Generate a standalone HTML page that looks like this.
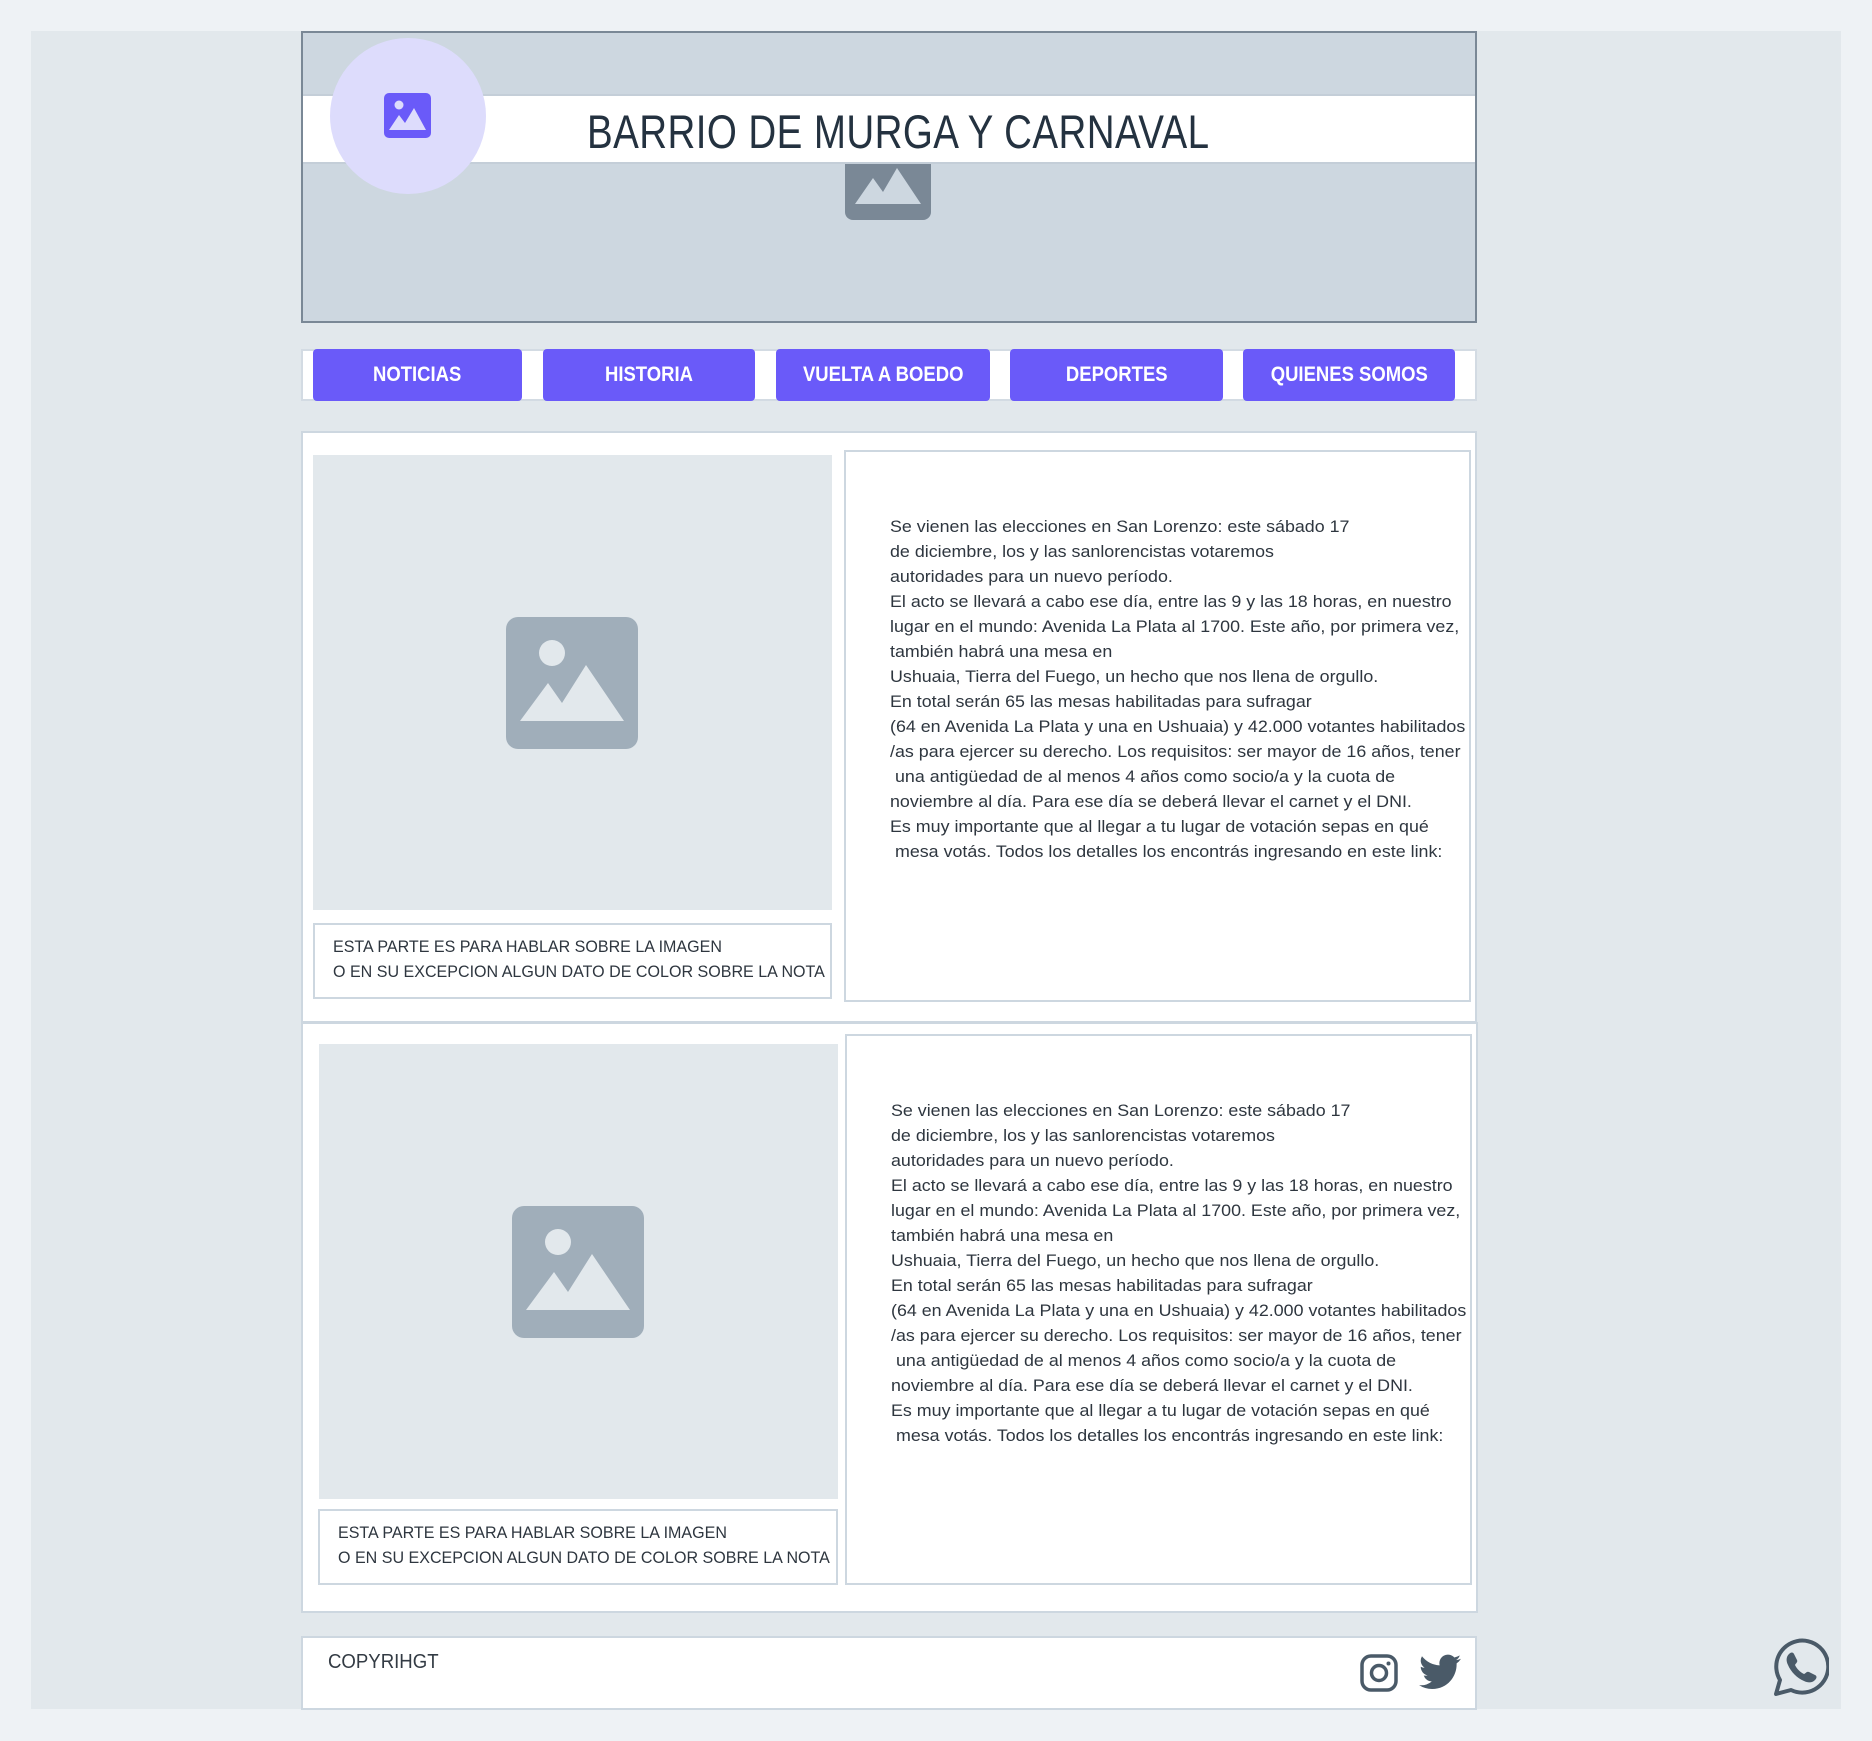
<!DOCTYPE html>
<html><head><meta charset="utf-8">
<style>
*{box-sizing:border-box;margin:0;padding:0}
body{width:1872px;height:1741px;background:#eef2f5;position:relative;overflow:hidden;font-family:"Liberation Sans",sans-serif;color:#333b44}
.a{position:absolute}
.panel{left:31px;top:31px;width:1810px;height:1678px;background:#e2e8ec}
.header{left:301px;top:31px;width:1176px;height:292px;background:#cdd7e0;border:2px solid #7a8896}
.band{left:303px;top:94px;width:1172px;height:70px;background:#fff;border-top:2px solid #c4ced8;border-bottom:2px solid #c4ced8}
.circle{left:330px;top:38px;width:156px;height:156px;border-radius:50%;background:#dddcfc}
.title{left:587px;top:104px;font-size:47px;color:#243240;white-space:nowrap;transform:scaleX(0.82);transform-origin:left top;letter-spacing:0.5px}
.nav{left:301px;top:349px;width:1176px;height:52px;background:#fff;border:2px solid #d3dbe3}
.btn{top:349px;height:52px;background:#6a5af9;border-radius:4px;color:#fff;font-weight:bold;font-size:21px;display:flex;align-items:center;justify-content:center}
.btn span{display:inline-block;transform:scaleX(0.88)}
.card{background:#fff;border:2px solid #cdd7e0}
.img{background:#e2e8ec}
.cap{background:#fff;border:2px solid #cdd7e0}
.cap p{position:absolute;left:18px;font-size:17px;white-space:nowrap;transform:scaleX(0.945);transform-origin:left top;color:#2e363f}
.txt{background:#fff;border:2px solid #cdd7e0}
.txt div{position:absolute;left:44px;font-size:17px;line-height:25px;white-space:pre;transform:scaleX(1.05);transform-origin:left top;color:#2e363f}
</style></head><body>
<div class="a panel"></div>
<div class="a header"></div>
<svg class="a" style="left:845px;top:150px" width="86" height="70" viewBox="0 0 86 70"><rect x="0" y="0" width="86" height="70" rx="8" fill="#7a8896"/><path d="M10 54 L28 28 L38 42 L52 18 L76 54 Z" fill="#cdd7e0"/></svg>
<div class="a band"></div>
<div class="a circle"></div>
<svg class="a" style="left:384px;top:93px" width="47" height="45" viewBox="0 0 47 45"><rect width="47" height="45" rx="5" fill="#6a5af9"/><circle cx="15" cy="12" r="4.5" fill="#dddcfc"/><path d="M5 37 L15 22 L21 30 L30 15 L42 37 Z" fill="#dddcfc"/></svg>
<div class="a title">BARRIO DE MURGA Y CARNAVAL</div>

<div class="a nav"></div>
<div class="a btn" style="left:313px;width:209px"><span>NOTICIAS</span></div>
<div class="a btn" style="left:543px;width:212px"><span>HISTORIA</span></div>
<div class="a btn" style="left:776px;width:214px"><span>VUELTA A BOEDO</span></div>
<div class="a btn" style="left:1010px;width:213px"><span>DEPORTES</span></div>
<div class="a btn" style="left:1243px;width:212px"><span>QUIENES SOMOS</span></div>

<!-- card 1 -->
<div class="a card" style="left:301px;top:431px;width:1176px;height:592px"></div>
<div class="a img" style="left:313px;top:455px;width:519px;height:455px"></div>
<svg class="a" style="left:506px;top:617px" width="132" height="132" viewBox="0 0 132 132"><rect width="132" height="132" rx="12" fill="#a0aeba"/><circle cx="46" cy="36" r="13" fill="#e2e8ec"/><path d="M14 104 L42 66 L56 86 L80 48 L118 104 Z" fill="#e2e8ec"/></svg>
<div class="a cap" style="left:313px;top:923px;width:519px;height:76px"><p style="top:12px">ESTA PARTE ES PARA HABLAR SOBRE LA IMAGEN</p><p style="top:37px">O EN SU EXCEPCION ALGUN DATO DE COLOR SOBRE LA NOTA</p></div>
<div class="a txt" style="left:844px;top:450px;width:627px;height:552px"><div style="top:62px">Se vienen las elecciones en San Lorenzo: este sábado 17
de diciembre, los y las sanlorencistas votaremos
autoridades para un nuevo período.
El acto se llevará a cabo ese día, entre las 9 y las 18 horas, en nuestro
lugar en el mundo: Avenida La Plata al 1700. Este año, por primera vez,
también habrá una mesa en
Ushuaia, Tierra del Fuego, un hecho que nos llena de orgullo.
En total serán 65 las mesas habilitadas para sufragar
(64 en Avenida La Plata y una en Ushuaia) y 42.000 votantes habilitados
/as para ejercer su derecho. Los requisitos: ser mayor de 16 años, tener
 una antigüedad de al menos 4 años como socio/a y la cuota de
noviembre al día. Para ese día se deberá llevar el carnet y el DNI.
Es muy importante que al llegar a tu lugar de votación sepas en qué
 mesa votás. Todos los detalles los encontrás ingresando en este link:</div></div>

<!-- card 2 -->
<div class="a card" style="left:301px;top:1022px;width:1177px;height:591px"></div>
<div class="a img" style="left:319px;top:1044px;width:519px;height:455px"></div>
<svg class="a" style="left:512px;top:1206px" width="132" height="132" viewBox="0 0 132 132"><rect width="132" height="132" rx="12" fill="#a0aeba"/><circle cx="46" cy="36" r="13" fill="#e2e8ec"/><path d="M14 104 L42 66 L56 86 L80 48 L118 104 Z" fill="#e2e8ec"/></svg>
<div class="a cap" style="left:318px;top:1509px;width:520px;height:76px"><p style="top:12px">ESTA PARTE ES PARA HABLAR SOBRE LA IMAGEN</p><p style="top:37px">O EN SU EXCEPCION ALGUN DATO DE COLOR SOBRE LA NOTA</p></div>
<div class="a txt" style="left:845px;top:1034px;width:627px;height:551px"><div style="top:62px">Se vienen las elecciones en San Lorenzo: este sábado 17
de diciembre, los y las sanlorencistas votaremos
autoridades para un nuevo período.
El acto se llevará a cabo ese día, entre las 9 y las 18 horas, en nuestro
lugar en el mundo: Avenida La Plata al 1700. Este año, por primera vez,
también habrá una mesa en
Ushuaia, Tierra del Fuego, un hecho que nos llena de orgullo.
En total serán 65 las mesas habilitadas para sufragar
(64 en Avenida La Plata y una en Ushuaia) y 42.000 votantes habilitados
/as para ejercer su derecho. Los requisitos: ser mayor de 16 años, tener
 una antigüedad de al menos 4 años como socio/a y la cuota de
noviembre al día. Para ese día se deberá llevar el carnet y el DNI.
Es muy importante que al llegar a tu lugar de votación sepas en qué
 mesa votás. Todos los detalles los encontrás ingresando en este link:</div></div>

<!-- footer -->
<div class="a card" style="left:301px;top:1636px;width:1176px;height:74px"></div>
<div class="a" style="left:328px;top:1651px;font-size:20px;color:#333b44;transform:scaleX(0.93);transform-origin:left top">COPYRIHGT</div>
<svg class="a" style="left:1360px;top:1654px" width="38" height="38" viewBox="0 0 38 38"><rect x="2" y="2" width="34" height="34" rx="9" fill="none" stroke="#4a5a68" stroke-width="3.5"/><circle cx="19" cy="19" r="7.5" fill="none" stroke="#4a5a68" stroke-width="3.5"/><circle cx="28.5" cy="9.5" r="2" fill="#4a5a68"/></svg>
<svg class="a" style="left:1419px;top:1654px" width="42" height="36" viewBox="0 0 24 20"><path fill="#4a5a68" d="M24 2.4a9.8 9.8 0 0 1-2.8.8A4.9 4.9 0 0 0 23.3.5a9.9 9.9 0 0 1-3.1 1.2A4.9 4.9 0 0 0 11.8 6.2 14 14 0 0 1 1.7 1 4.9 4.9 0 0 0 3.2 7.6 4.9 4.9 0 0 1 1 7v.1a4.9 4.9 0 0 0 3.9 4.8 4.9 4.9 0 0 1-2.2.1 4.9 4.9 0 0 0 4.6 3.4A9.9 9.9 0 0 1 0 17.5 14 14 0 0 0 7.5 19.7c9.1 0 14-7.5 14-14v-.6A10 10 0 0 0 24 2.4z"/></svg>
<svg class="a" style="left:1767px;top:1636px" width="62" height="62" viewBox="0 0 62 62"><path d="M9 58 L13 44 A26 26 0 1 1 24 54 Z" fill="none" stroke="#4a5a68" stroke-width="4" stroke-linejoin="round"/><path d="M22 18 c2-2 4-2 5 0 l3 6 c1 2-1 3-2 5 c2 4 5 7 9 9 c2-1 3-3 5-2 l6 3 c2 1 2 3 0 5 c-3 3-7 3-11 1 c-7-3-13-9-16-16 c-2-4-2-8 1-11z" fill="#4a5a68"/></svg>
</body></html>
